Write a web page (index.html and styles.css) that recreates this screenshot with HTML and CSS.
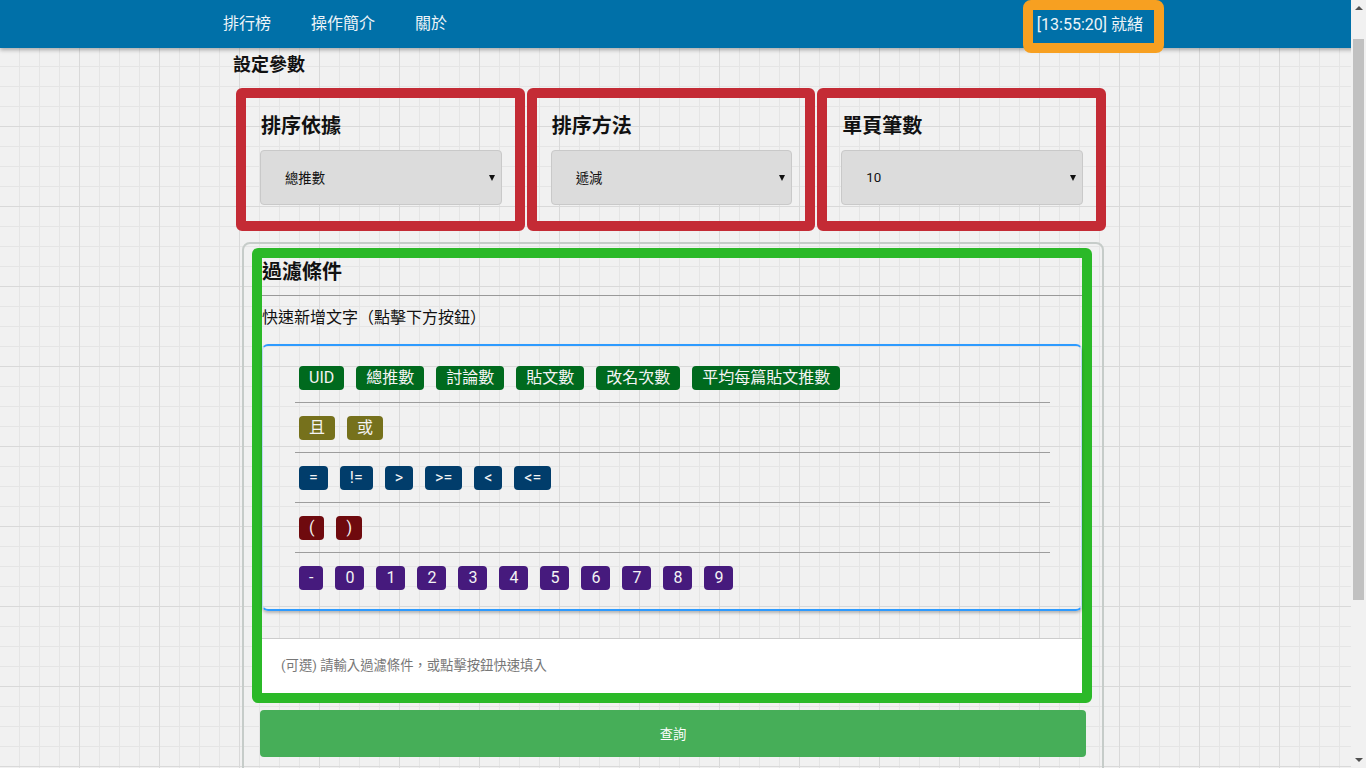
FILE: index.html
```html
<!DOCTYPE html>
<html lang="zh-Hant">
<head>
<meta charset="utf-8">
<title>排行榜</title>
<link rel="stylesheet" href="styles.css">
</head>
<body>
<nav class="topbar">
  <div class="nav-inner">
    <a class="nav-link" href="#">排行榜</a>
    <a class="nav-link" href="#">操作簡介</a>
    <a class="nav-link" href="#">關於</a>
    <div class="status">[13:55:20] 就緒</div>
  </div>
</nav>
<main class="page">
  <h2 class="section-title">設定參數</h2>
  <div class="params">
    <div class="param-box">
      <h3 class="param-label">排序依據</h3>
      <div class="select"><span>總推數</span><span class="arrow"></span></div>
    </div>
    <div class="param-box">
      <h3 class="param-label">排序方法</h3>
      <div class="select"><span>遞減</span><span class="arrow"></span></div>
    </div>
    <div class="param-box">
      <h3 class="param-label">單頁筆數</h3>
      <div class="select"><span>10</span><span class="arrow"></span></div>
    </div>
  </div>
  <section class="panel">
    <div class="filter-box">
      <h3 class="filter-title">過濾條件</h3>
      <hr class="filter-rule">
      <p class="filter-hint">快速新增文字（點擊下方按鈕）</p>
      <div class="quick">
        <div class="quick-row">
          <span class="chip chip-field">UID</span>
          <span class="chip chip-field">總推數</span>
          <span class="chip chip-field">討論數</span>
          <span class="chip chip-field">貼文數</span>
          <span class="chip chip-field">改名次數</span>
          <span class="chip chip-field">平均每篇貼文推數</span>
        </div>
        <div class="quick-row">
          <span class="chip chip-logic">且</span>
          <span class="chip chip-logic">或</span>
        </div>
        <div class="quick-row">
          <span class="chip chip-op">=</span>
          <span class="chip chip-op">!=</span>
          <span class="chip chip-op">&gt;</span>
          <span class="chip chip-op">&gt;=</span>
          <span class="chip chip-op">&lt;</span>
          <span class="chip chip-op">&lt;=</span>
        </div>
        <div class="quick-row">
          <span class="chip chip-paren">(</span>
          <span class="chip chip-paren">)</span>
        </div>
        <div class="quick-row">
          <span class="chip chip-num">-</span>
          <span class="chip chip-num">0</span>
          <span class="chip chip-num">1</span>
          <span class="chip chip-num">2</span>
          <span class="chip chip-num">3</span>
          <span class="chip chip-num">4</span>
          <span class="chip chip-num">5</span>
          <span class="chip chip-num">6</span>
          <span class="chip chip-num">7</span>
          <span class="chip chip-num">8</span>
          <span class="chip chip-num">9</span>
        </div>
      </div>
      <div class="filter-input">(可選) 請輸入過濾條件，或點擊按鈕快速填入</div>
    </div>
    <button class="submit" type="button">查詢</button>
  </section>
</main>
<div class="scrollbar" aria-hidden="true">
  <span class="sb-arrow sb-up"></span>
  <span class="sb-thumb"></span>
  <span class="sb-arrow sb-down"></span>
</div>
</body>
</html>
```

FILE: styles.css
```css
html {
  background-color: #f1f1f1;
  background-image:
    linear-gradient(to right, #d9d9d9 1px, transparent 1px),
    linear-gradient(to bottom, #d9d9d9 1px, transparent 1px),
    linear-gradient(to right, #e5e5e5 1px, transparent 1px),
    linear-gradient(to bottom, #e5e5e5 1px, transparent 1px);
  background-size: 80px 80px, 80px 80px, 20px 20px, 20px 20px;
  background-position: 79px 46px, 79px 46px, 19px 6px, 19px 6px;
}

body {
  margin: 0;
  font-family: Roboto, "Noto Sans CJK TC", sans-serif;
  color: #111;
}

/* window scrollbar as seen in the capture */
.scrollbar {
  position: fixed;
  top: 0;
  right: 0;
  z-index: 5;
  width: 15px;
  height: 100vh;
  background: #f1f1f1;
  display: flex;
  flex-direction: column;
  align-items: center;
}

.sb-arrow {
  width: 0;
  height: 0;
  border-left: 4px solid transparent;
  border-right: 4px solid transparent;
}

.sb-up {
  margin-top: 6px;
  border-bottom: 4px solid #505050;
}

.sb-thumb {
  margin-top: 29px;
  width: 11px;
  height: 561px;
  background: #c1c1c1;
}

.sb-down {
  margin-top: auto;
  margin-bottom: 6px;
  border-top: 4px solid #505050;
}

.topbar {
  position: relative;
  z-index: 2;
  height: 48px;
  background: #0070a8;
  box-shadow: 0 2px 4px rgba(0, 0, 0, 0.3);
}

.nav-inner {
  display: flex;
  align-items: flex-start;
  gap: 40px;
  margin-left: 223px;
  width: 941px;
}

.nav-link {
  font-size: 16px;
  line-height: 48px;
  color: #eef4f8;
  text-decoration: none;
}

.status {
  margin-left: auto;
  box-sizing: border-box;
  height: 53px;
  padding: 0 11px 0 4px;
  border: 10px solid #f7a021;
  border-radius: 8px;
  font-size: 16px;
  line-height: 29px;
  color: #eef4f8;
  background: #0070a8;
}

.page {
  width: 870px;
  margin-left: 236px;
  padding-bottom: 40px;
}

.section-title {
  margin: 4px 0 10px -3px;
  font-size: 18px;
  line-height: 26px;
  font-weight: bold;
}

.params {
  display: grid;
  grid-template-columns: repeat(3, 1fr);
  gap: 2px;
}

.param-box {
  box-sizing: border-box;
  height: 143px;
  padding: 14px 13px 0 14px;
  border: 10px solid #c42b35;
  border-radius: 6px;
}

.param-label {
  margin: 0 0 9px 1px;
  font-size: 20px;
  line-height: 29px;
  font-weight: bold;
}

.select {
  box-sizing: border-box;
  height: 55px;
  display: flex;
  align-items: center;
  justify-content: space-between;
  padding: 0 6px 0 24px;
  background: #dcdcdc;
  border: 1px solid #c9c9c9;
  border-radius: 4px;
  font-size: 13.33px;
  color: #111;
}

.arrow {
  width: 0;
  height: 0;
  border-left: 3px solid transparent;
  border-right: 3px solid transparent;
  border-top: 6px solid #111;
}

.panel {
  margin: 11px 2px 0 6px;
  min-height: 720px;
  border: 2px solid #c6ccc9;
  border-radius: 8px;
}

.filter-box {
  margin: 4px 10px 0 8px;
  border: 10px solid #2bb928;
  border-radius: 6px;
}

.filter-title {
  margin: 0;
  font-size: 20px;
  line-height: 28px;
  font-weight: bold;
}

.filter-rule {
  margin: 9px 0 0;
  border: 0;
  border-top: 1px solid #999;
}

.filter-hint {
  margin: 10px 0 14px;
  font-size: 16px;
  line-height: 24px;
}

.quick {
  padding: 7px 31px 7px 32px;
  border-top: 2px solid #2e9bff;
  border-bottom: 2px solid #2e9bff;
  border-left: 1px solid #b9d8f4;
  border-right: 1px solid #b9d8f4;
  border-radius: 6px;
  box-shadow: 0 2px 3px rgba(0, 0, 0, 0.25);
}

.quick-row {
  display: flex;
  gap: 12px;
  padding: 13px 4px 12px;
}

.quick-row + .quick-row {
  border-top: 1px solid #9d9d9d;
}

.chip {
  display: block;
  height: 24px;
  padding: 0 10px;
  border-radius: 4px;
  font-size: 16px;
  line-height: 24px;
  color: #f4f4f4;
}

.chip-field { background: #006a1e; }
.chip-logic { background: #76711c; }
.chip-op { background: #013d6b; }
.chip-paren { background: #6f0a0e; }
.chip-num { background: #461a7d; }

.filter-input {
  margin-top: 27px;
  height: 55px;
  box-sizing: border-box;
  padding-left: 19px;
  background: #fff;
  border-top: 1px solid #cccccc;
  font-size: 13.33px;
  line-height: 54px;
  color: #777;
}

.submit {
  display: block;
  width: calc(100% - 32px);
  height: 47px;
  margin: 7px 16px 0;
  border: 0;
  border-radius: 4px;
  background: #46ae58;
  color: #fff;
  font-family: Roboto, "Noto Sans CJK TC", sans-serif;
  font-size: 13.33px;
}
```
